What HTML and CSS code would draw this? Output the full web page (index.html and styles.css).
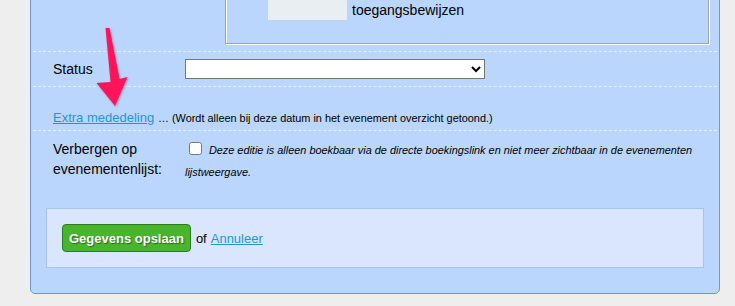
FILE: index.html
```html
<!DOCTYPE html>
<html lang="nl">
<head>
<meta charset="UTF-8" />
<meta name="viewport" content="width=device-width, initial-scale=1" />
<title>Editie bewerken</title>
<link rel="stylesheet" href="styles.css">
</head>
<body>
  <div class="panel">
    <!-- Tickets block (top part scrolled away) -->
    <div class="row row-tickets">
      <div class="label"></div>
      <div class="value">
        <div class="ticket-box">
          <input class="ticket-input" type="text"> toegangsbewijzen
        </div>
      </div>
    </div>

    <div class="row row-status">
      <div class="label">Status</div>
      <div class="value">
        <select class="status-select">
          <option></option>
        </select>
      </div>
    </div>

    <div class="row row-note">
      <a href="#" class="link">Extra mededeling</a>
      <span class="hint">&hellip; (Wordt alleen bij deze datum in het evenement overzicht getoond.)</span>
    </div>

    <div class="row row-hide">
      <div class="label">Verbergen op<br>evenementenlijst:</div>
      <div class="value">
        <input type="checkbox" class="check">
        <em class="hint-italic">Deze editie is alleen boekbaar via de directe boekingslink en niet meer zichtbaar in de evenementen lijstweergave.</em>
      </div>
    </div>

    <!-- Save / cancel -->
    <div class="actions">
      <button class="save">Gegevens opslaan</button>
      <span class="or">of</span>
      <a href="#" class="link">Annuleer</a>
    </div>
  </div>

  <!-- Pink annotation arrow -->
  <svg class="arrow" width="735" height="306" viewBox="0 0 735 306">
    <polygon points="105.5,28 109.5,28 119.5,79 127.5,77 115,106 96.5,83 110.5,82" fill="#ff1459" />
  </svg>
</body>
</html>
```

FILE: styles.css
```css
/* Edit form panel */

body {
  margin: 0;
  background-color: #eeeeee;
  font-family: "Liberation Sans", Arial, sans-serif;
  font-size: 14px;
  color: #000;
}

.panel {
  width: 688px;
  margin: -33px 0 0 30px;
  background-color: #bad6fd;
  border: 1px solid #7096d4;
  border-radius: 0 0 5px 5px;
  padding-bottom: 25px;
}

/* Form rows */
.row {
  margin: 0 2px;
  display: grid;
  grid-template-columns: 152px 1fr;
  align-items: center;
  border-bottom: 1px dashed #e4eeff;
}

.label {
  padding-left: 20px;
  line-height: 20px;
}

/* Ticket box */
.row-tickets {
  padding: 10px 0 7px;
}

.ticket-box {
  margin: 0 8px 0 40px;
  padding: 20px 0 22px 41px;
  border: 1px solid #a3a3a3;
  box-shadow: inset 1px 1px 0 #fff, 1px 1px 0 #fff;
  display: flex;
  align-items: center;
  gap: 4px;
}

.ticket-input {
  width: 81px;
  height: 22px;
  box-sizing: border-box;
  margin: 0;
  border: 1px solid #c3d3e4;
  background-color: #e9eef3;
}

/* Status */
.row-status {
  padding: 7px 0;
}

.status-select {
  width: 300px;
  height: 20px;
  margin: 0;
  background-color: #fff;
  border: 1px solid #767676;
  border-radius: 0;
  font-size: 13px;
}

/* Extra note */
.row-note {
  display: block;
  padding: 23px 0 4px 20px;
  line-height: 15px;
}

.link {
  color: #1e96d8;
  font-size: 13px;
}

.hint {
  font-size: 10.9px;
}

/* Hide from list */
.row-hide {
  align-items: start;
  border-bottom: none;
  padding: 8px 0;
}

.row-hide .value {
  line-height: 21px;
}

.check {
  width: 13px;
  height: 13px;
  margin: 3px 3px 3px 4px;
  vertical-align: -1px;
}

.hint-italic {
  font-size: 10.9px;
}

/* Buttons area */
.actions {
  margin: 17px 15px 0;
  padding: 15px;
  height: 28px;
  background-color: #d9e6fd;
  border: 1px solid #a4c2f4;
  display: flex;
  align-items: center;
  font-size: 13px;
}

.save {
  height: 28px;
  padding: 0 6px;
  background-color: #48b52d;
  border: 1px solid #2b7d1c;
  border-radius: 4px;
  color: #fff;
  font-family: "Liberation Sans", Arial, sans-serif;
  font-size: 13px;
  font-weight: bold;
  text-shadow: 1px 1px 1px #2a6b1a;
  cursor: pointer;
}

.or {
  margin: 0 4px 0 5px;
}

/* Annotation overlay */
.arrow {
  position: absolute;
  left: 0;
  top: 0;
  pointer-events: none;
  filter: drop-shadow(1px 1px 1px rgba(120, 0, 40, 0.35));
}
```
